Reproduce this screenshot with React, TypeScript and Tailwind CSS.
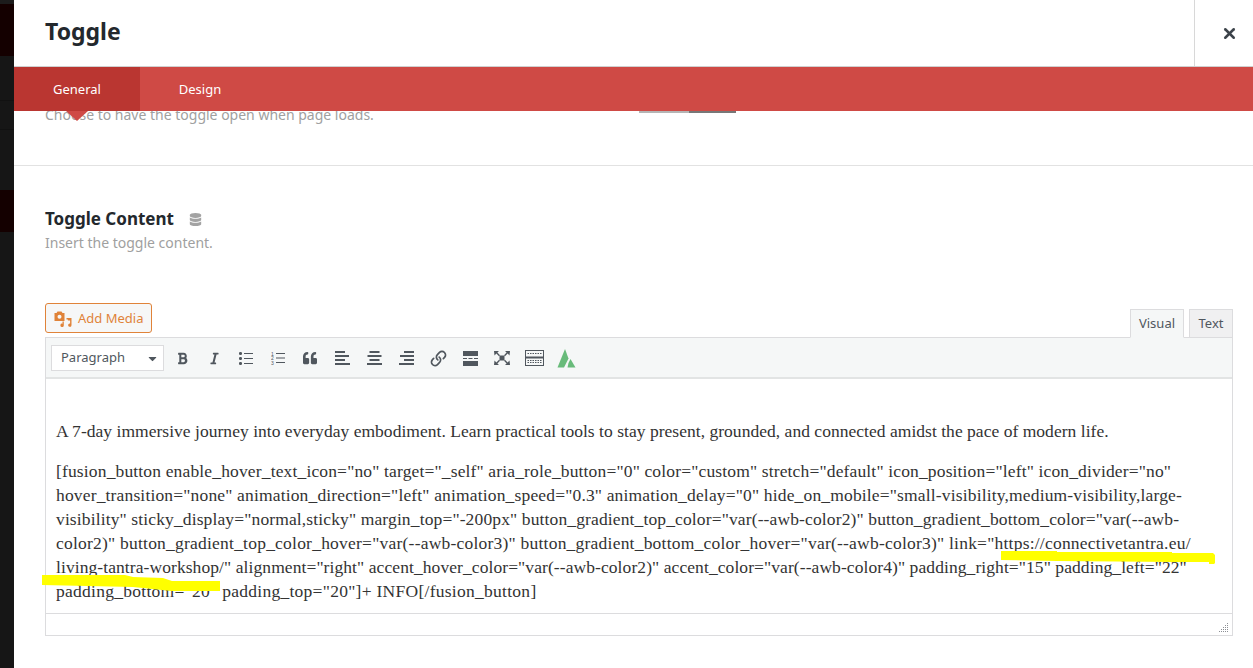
import { FaBold, FaItalic, FaQuoteLeft, FaDatabase, FaCaretDown } from "react-icons/fa";
import { Link, X } from "lucide-react";

const uiFont = "font-['Noto_Sans','Open_Sans',sans-serif]";

function ToolButton({ children }: { children: React.ReactNode }) {
  return <span className="w-8 h-6 flex items-center justify-center text-[#50575e]">{children}</span>;
}

function MediaIcon() {
  return (
    <svg width="18" height="16" viewBox="0 0 18 16" fill="#e08339">
      <path d="M0.5 2h2l1-1.5h4L8.5 2h2v8h-10z" />
      <circle cx="5.5" cy="5.8" r="2" fill="#f6f7f7" />
      <path d="M12.5 7h5v7.2a1.7 1.7 0 1 1-1.4-1.7V9.5h-2.2V8.5h-1.4z" />
      <path d="M8.5 10.5h1.3v3.8a1.7 1.7 0 1 1-1.3-1.6z" />
    </svg>
  );
}

function BulletListIcon() {
  return (
    <svg width="14" height="13" viewBox="0 0 14 13" fill="#50575e">
      <rect x="0" y="0" width="3" height="3" rx="1.2" />
      <rect x="0" y="5" width="3" height="3" rx="1.2" />
      <rect x="0" y="10" width="3" height="3" rx="1.2" />
      <rect x="5" y="1" width="9" height="1" />
      <rect x="5" y="6" width="9" height="1" />
      <rect x="5" y="11" width="9" height="1" />
    </svg>
  );
}

function NumListIcon() {
  return (
    <svg width="14" height="14" viewBox="0 0 14 14" fill="#50575e">
      <text x="0" y="4.5" fontSize="5" fontFamily="Liberation Sans">1</text>
      <text x="0" y="9" fontSize="5" fontFamily="Liberation Sans">2</text>
      <text x="0" y="13.5" fontSize="5" fontFamily="Liberation Sans">3</text>
      <rect x="5" y="2" width="9" height="1" />
      <rect x="5" y="6.5" width="9" height="1" />
      <rect x="5" y="11" width="9" height="1" />
    </svg>
  );
}

function AlignIcon({ align }: { align: "left" | "center" | "right" }) {
  const x = (w: number) => (align === "left" ? 0 : align === "center" ? (15 - w) / 2 : 15 - w);
  return (
    <svg width="15" height="14" viewBox="0 0 15 14" fill="#50575e">
      <rect x={x(10)} y="0" width="10" height="2" />
      <rect x={x(14)} y="4" width="14" height="2" />
      <rect x={x(10)} y="8" width="10" height="2" />
      <rect x={x(15)} y="12" width="15" height="2" />
    </svg>
  );
}

function HrIcon() {
  return (
    <svg width="15" height="15" viewBox="0 0 15 15" fill="#50575e">
      <rect x="0" y="0" width="15" height="5" />
      <rect x="0" y="7" width="4" height="1" />
      <rect x="5.5" y="7" width="4" height="1" />
      <rect x="11" y="7" width="4" height="1" />
      <rect x="0" y="10" width="15" height="5" />
    </svg>
  );
}

function FullscreenIcon() {
  return (
    <svg width="18" height="16" viewBox="0 0 18 16" fill="#50575e">
      <path d="M1 1h5L4.4 2.6 7 5.2 6 6.2 3.4 3.6 1.5 5.5z" />
      <path d="M17 1h-5l1.6 1.6L11 5.2l1 1 2.6-2.6 1.9 1.9z" />
      <path d="M1 15h5l-1.6-1.6L7 10.8l-1-1-2.6 2.6-1.9-1.9z" />
      <path d="M17 15h-5l1.6-1.6-2.6-2.6 1-1 2.6 2.6 1.9-1.9z" />
      <rect x="6.5" y="5.5" width="5" height="5" />
    </svg>
  );
}

function KeyboardIcon() {
  return (
    <svg width="19" height="16" viewBox="0 0 19 16" fill="none" stroke="#50575e">
      <rect x="0.5" y="0.5" width="18" height="15" />
      <path d="M0.5 7.5h18" strokeWidth="2" />
      <path d="M2.5 3.5h14M2.5 10.5h14M2.5 12.5h14" strokeDasharray="1.5 1" />
    </svg>
  );
}

function AvadaIcon() {
  return (
    <svg width="19" height="19" viewBox="0 0 19 19" fill="#68bb7a">
      <path d="M8 0 L11.5 9.5 L7 18.5 H0.5 Z" />
      <path d="M13.5 10 L18.5 18.5 H10.5 L11.5 14 Z" />
    </svg>
  );
}

function ResizeHandle() {
  return (
    <svg className="absolute right-[3px] bottom-[3px]" width="10" height="10" viewBox="0 0 10 10" fill="#8c8f94">
      <path d="M8 1h1v1H8zM6 3h1v1H6zM8 3h1v1H8zM4 5h1v1H4zM6 5h1v1H6zM8 5h1v1H8zM2 7h1v1H2zM4 7h1v1H4zM6 7h1v1H6zM8 7h1v1H8zM0 9h1v1H0zM2 9h1v1H2zM4 9h1v1H4zM6 9h1v1H6zM8 9h1v1H8z" />
    </svg>
  );
}

export default function App() {
  return (
    <div className={`relative w-[1253px] h-[668px] overflow-hidden bg-white flex ${uiFont}`}>
      {/* backdrop strip */}
      <div className="w-[14px] shrink-0 flex flex-col bg-[#161616]">
        <div className="h-[4px] bg-[#1c1c1c]" />
        <div className="h-[52px] bg-[#140000]" />
        <div className="h-[45px] border-b border-[#111111]" />
        <div className="h-[29px] border-b border-[#111111]" />
        <div className="h-[60px]" />
        <div className="h-[42px] bg-[#140000]" />
      </div>

      <div className="flex-1 flex flex-col min-w-0">
        {/* Title bar */}
        <div className="h-[66px] shrink-0 flex justify-between">
          <h1 className="pl-[31px] pt-[13px] text-[23px] leading-[36px] font-bold text-[#23282d]">Toggle</h1>
          <div className="w-[59px] border-l border-[#d8d8d8] flex items-center justify-center pl-[10px]">
            <X size={17} strokeWidth={3.6} className="text-[#3c434a]" />
          </div>
        </div>

        {/* Tabs */}
        <div className="relative z-10 h-[45px] shrink-0 border-t border-[#d0d0d0] bg-[#cf4a45] flex text-[13px] text-white">
          <div className="relative w-[126px] bg-[#ba3631] flex items-center justify-center pt-[1px]">
            General
            <span className="absolute left-[52px] top-full w-0 h-0 border-l-[11px] border-r-[11px] border-t-[10px] border-l-transparent border-r-transparent border-t-[#cf4a45]" />
          </div>
          <div className="w-[120px] flex items-center justify-center pt-[1px]">Design</div>
        </div>

        {/* Scrolled option */}
        <div className="relative h-[55px] shrink-0 border-b border-[#e2e2e2]">
          <p className="pl-[31px] -mt-[5px] text-[14px] leading-[18px] text-[#a0a0a0]">Choose to have the toggle open when page loads.</p>
          <div className="absolute left-[625px] top-0 flex h-[2px]">
            <span className="w-[50px] bg-[#b5b5b5]" />
            <span className="w-[47px] bg-[#777777]" />
          </div>
        </div>

        {/* Toggle Content */}
        <div className="pl-[31px] pr-[20px] pt-[42px] flex flex-col">
          <div className="flex items-center gap-[15px] h-[22px]">
            <h2 className="text-[17px] font-bold text-[#23282d]">Toggle Content</h2>
            <FaDatabase size={13} className="text-[#a3a3a3]" />
          </div>
          <p className="text-[14px] leading-[20px] mt-[3px] text-[#a0a0a0]">Insert the toggle content.</p>

          <div className="mt-[49px] flex items-end justify-between h-[35px]">
            <button className="mb-[4px] w-[107px] h-[30px] border border-[#e08339] rounded-[3px] bg-[#f6f7f7] flex items-center gap-[6px] pl-[8px] pt-[1px] text-[13px] text-[#e08339]">
              <MediaIcon />
              Add Media
            </button>
            <div className="flex gap-[5px] text-[13px] text-[#50575e] relative top-[1px]">
              <span className="w-[54px] h-[29px] border border-[#dcdcde] border-b-[#f5f7f7] bg-[#f5f7f7] flex items-center justify-center">Visual</span>
              <span className="w-[44px] h-[29px] border border-[#dcdcde] bg-[#f0f0f1] flex items-center justify-center">Text</span>
            </div>
          </div>

          {/* Editor */}
          <div className="border border-[#dcdcde] bg-white">
            <div className="h-[41px] bg-[#f5f7f7] border-b-2 border-[#e2e4e4] flex items-center pl-[5px] pt-[1px]">
              <div className="w-[113px] h-[26px] mr-[2px] bg-white border border-[#dcdcde] flex items-center justify-between pl-[9px] pr-[4px] text-[13px] text-[#50575e]">
                Paragraph
                <FaCaretDown size={13} />
              </div>
              <ToolButton><FaBold size={13} /></ToolButton>
              <ToolButton><FaItalic size={13} /></ToolButton>
              <ToolButton><BulletListIcon /></ToolButton>
              <ToolButton><NumListIcon /></ToolButton>
              <ToolButton><FaQuoteLeft size={14} /></ToolButton>
              <ToolButton><AlignIcon align="left" /></ToolButton>
              <ToolButton><AlignIcon align="center" /></ToolButton>
              <ToolButton><AlignIcon align="right" /></ToolButton>
              <ToolButton><Link size={17} strokeWidth={2.4} className="-scale-x-100 rotate-90" /></ToolButton>
              <ToolButton><HrIcon /></ToolButton>
              <ToolButton><FullscreenIcon /></ToolButton>
              <ToolButton><KeyboardIcon /></ToolButton>
              <ToolButton><AvadaIcon /></ToolButton>
            </div>

            <div className="h-[234px] px-[10px] pt-[40px] font-['Liberation_Serif',serif] text-[17.5px] leading-[24px] text-[#333333] whitespace-nowrap">
              <p className="tracking-[0.03px]">A 7-day immersive journey into everyday embodiment. Learn practical tools to stay present, grounded, and connected amidst the pace of modern life.</p>
              <p className="mt-[16px] tracking-[0.15px]">[fusion_button enable_hover_text_icon="no" target="_self" aria_role_button="0" color="custom" stretch="default" icon_position="left" icon_divider="no"</p>
              <p className="tracking-[0.16px]">hover_transition="none" animation_direction="left" animation_speed="0.3" animation_delay="0" hide_on_mobile="small-visibility,medium-visibility,large-</p>
              <p className="tracking-[0.13px]">visibility" sticky_display="normal,sticky" margin_top="-200px" button_gradient_top_color="var(--awb-color2)" button_gradient_bottom_color="var(--awb-</p>
              <p className="tracking-[0.22px]">color2)" button_gradient_top_color_hover="var(--awb-color3)" button_gradient_bottom_color_hover="var(--awb-color3)" link="https://connectivetantra.eu/</p>
              <p className="tracking-[0.08px]">living-tantra-workshop/" alignment="right" accent_hover_color="var(--awb-color2)" accent_color="var(--awb-color4)" padding_right="15" padding_left="22"</p>
              <p className="tracking-[0.27px]">padding_bottom="20" padding_top="20"]+ INFO[/fusion_button]</p>
            </div>

            <div className="relative h-[22px] border-t border-[#dcdcde]">
              <ResizeHandle />
            </div>
          </div>
        </div>
      </div>

      {/* Yellow marker strokes drawn on the screenshot */}
      <svg className="absolute inset-0 pointer-events-none" width="1253" height="668" viewBox="0 0 1253 668" fill="#ffff00">
        <path d="M1001 551 L1057 551 L1057 552 L1172 552 L1172 553 L1213 553 L1215 555 L1215 563 L1214 564 L1209 564 L1209 562 L1172 562 L1057 561 L1001 560 Z" />
        <path d="M42 575 L125 575 L133 577 L163 578 L172 581 L220 581 L220 591 L172 591 L133 587 L42 585 Z" />
      </svg>
    </div>
  );
}
